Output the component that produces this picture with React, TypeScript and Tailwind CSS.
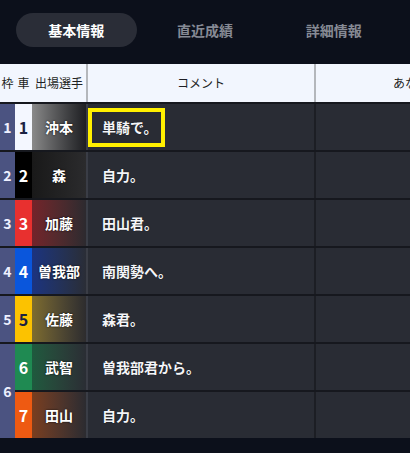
import { Fragment } from 'react';

type Entry = {
  car: number;
  name: string;
  comment: string;
  carClass: string;
  nameClass: string;
  highlight?: boolean;
};

const FRAMES: { frame: number; entries: Entry[] }[] = [
  {
    frame: 1,
    entries: [
      {
        car: 1,
        name: '沖本',
        comment: '単騎で。',
        carClass: 'bg-[#f4f7ff] text-[#1b2142]',
        nameClass: 'from-[#8a8a8a] to-[#1e1f22]',
        highlight: true,
      },
    ],
  },
  {
    frame: 2,
    entries: [
      { car: 2, name: '森', comment: '自力。', carClass: 'bg-black text-white', nameClass: 'from-[#191919] to-[#2b2b2d]' },
    ],
  },
  {
    frame: 3,
    entries: [
      { car: 3, name: '加藤', comment: '田山君。', carClass: 'bg-[#e8302f] text-white', nameClass: 'from-[#74232a] to-[#2c2a2f]' },
    ],
  },
  {
    frame: 4,
    entries: [
      { car: 4, name: '曽我部', comment: '南関勢へ。', carClass: 'bg-[#0a56dc] text-white', nameClass: 'from-[#1c3380] to-[#2a2d36]' },
    ],
  },
  {
    frame: 5,
    entries: [
      { car: 5, name: '佐藤', comment: '森君。', carClass: 'bg-[#fcc200] text-[#1b2142]', nameClass: 'from-[#7e6c2e] to-[#2d2c2e]' },
    ],
  },
  {
    frame: 6,
    entries: [
      { car: 6, name: '武智', comment: '曽我部君から。', carClass: 'bg-[#1f8a52] text-white', nameClass: 'from-[#1e5a3e] to-[#2a2d34]' },
      { car: 7, name: '田山', comment: '自力。', carClass: 'bg-[#ee5a12] text-white', nameClass: 'from-[#7a3e1e] to-[#2b2b30]' },
    ],
  },
];

const TABS = ['基本情報', '直近成績', '詳細情報'];

export default function App() {
  return (
    <div className="h-[453px] w-[410px] overflow-hidden bg-[#0c101b] font-['Noto_Sans_CJK_JP','Noto_Sans',sans-serif]">
      <div className="grid h-[64px] grid-cols-3 gap-2 px-4 pt-[13px]">
        {TABS.map((tab, i) => (
          <div
            key={tab}
            className={
              i === 0
                ? 'flex h-[34px] items-center justify-center rounded-full bg-[#2a2d37] text-sm font-bold text-white'
                : 'flex h-[34px] items-center justify-center rounded-full text-sm font-bold text-[#868a94]'
            }
          >
            {tab}
          </div>
        ))}
      </div>

      <div className="grid w-[542px] grid-cols-[15px_17px_56px_226px_228px] gap-y-[2px] bg-[#16181e]">
        {/* header */}
        <div className="flex h-[38px] items-center justify-center bg-[#f2f6fe] text-xs text-[#1e1f24]">枠</div>
        <div className="flex h-[38px] items-center justify-center bg-[#f2f6fe] text-xs text-[#1e1f24]">車</div>
        <div className="flex h-[38px] items-center justify-center border-r-2 border-[#b4b7bc] bg-[#f2f6fe] text-xs text-[#1e1f24]">
          出場選手
        </div>
        <div className="flex h-[38px] items-center justify-center bg-[#f2f6fe] text-xs text-[#1e1f24]">コメント</div>
        <div className="flex h-[38px] items-center justify-center border-l-2 border-[#b4b7bc] bg-[#f2f6fe] text-xs text-[#1e1f24]">
          あなたの予想
        </div>

        {FRAMES.map(({ frame, entries }) =>
          entries.map((e, idx) => (
            <Fragment key={e.car}>
              {idx === 0 && (
                <div
                  className={
                    entries.length > 1
                      ? 'row-span-2 flex items-center justify-center bg-[#4b5381] text-sm font-bold text-[#eef0ff]'
                      : 'flex items-center justify-center bg-[#4b5381] text-sm font-bold text-[#eef0ff]'
                  }
                >
                  {frame}
                </div>
              )}
              <div className={`flex h-[46px] items-center justify-center text-base font-bold ${e.carClass}`}>
                {e.car}
              </div>
              <div
                className={`flex h-[46px] items-center justify-center border-r-2 border-[#3a3d46] bg-gradient-to-r text-sm font-bold text-white [text-shadow:0_0_2px_rgba(0,0,0,0.9)] ${e.nameClass}`}
              >
                {e.name}
              </div>
              <div className="flex h-[46px] items-center bg-[#292c34] text-sm font-bold text-[#f4f5f8] [text-shadow:0_0_1px_rgba(0,0,0,0.8)]">
                {e.highlight ? (
                  <span className="flex h-[39px] w-[77px] items-center border-4 border-[#fff000] pl-[10px]">{e.comment}</span>
                ) : (
                  <span className="pl-[14px]">{e.comment}</span>
                )}
              </div>
              <div className="h-[46px] border-l-2 border-[#1c1e24] bg-[#292c34]" />
            </Fragment>
          )),
        )}
      </div>
    </div>
  );
}
